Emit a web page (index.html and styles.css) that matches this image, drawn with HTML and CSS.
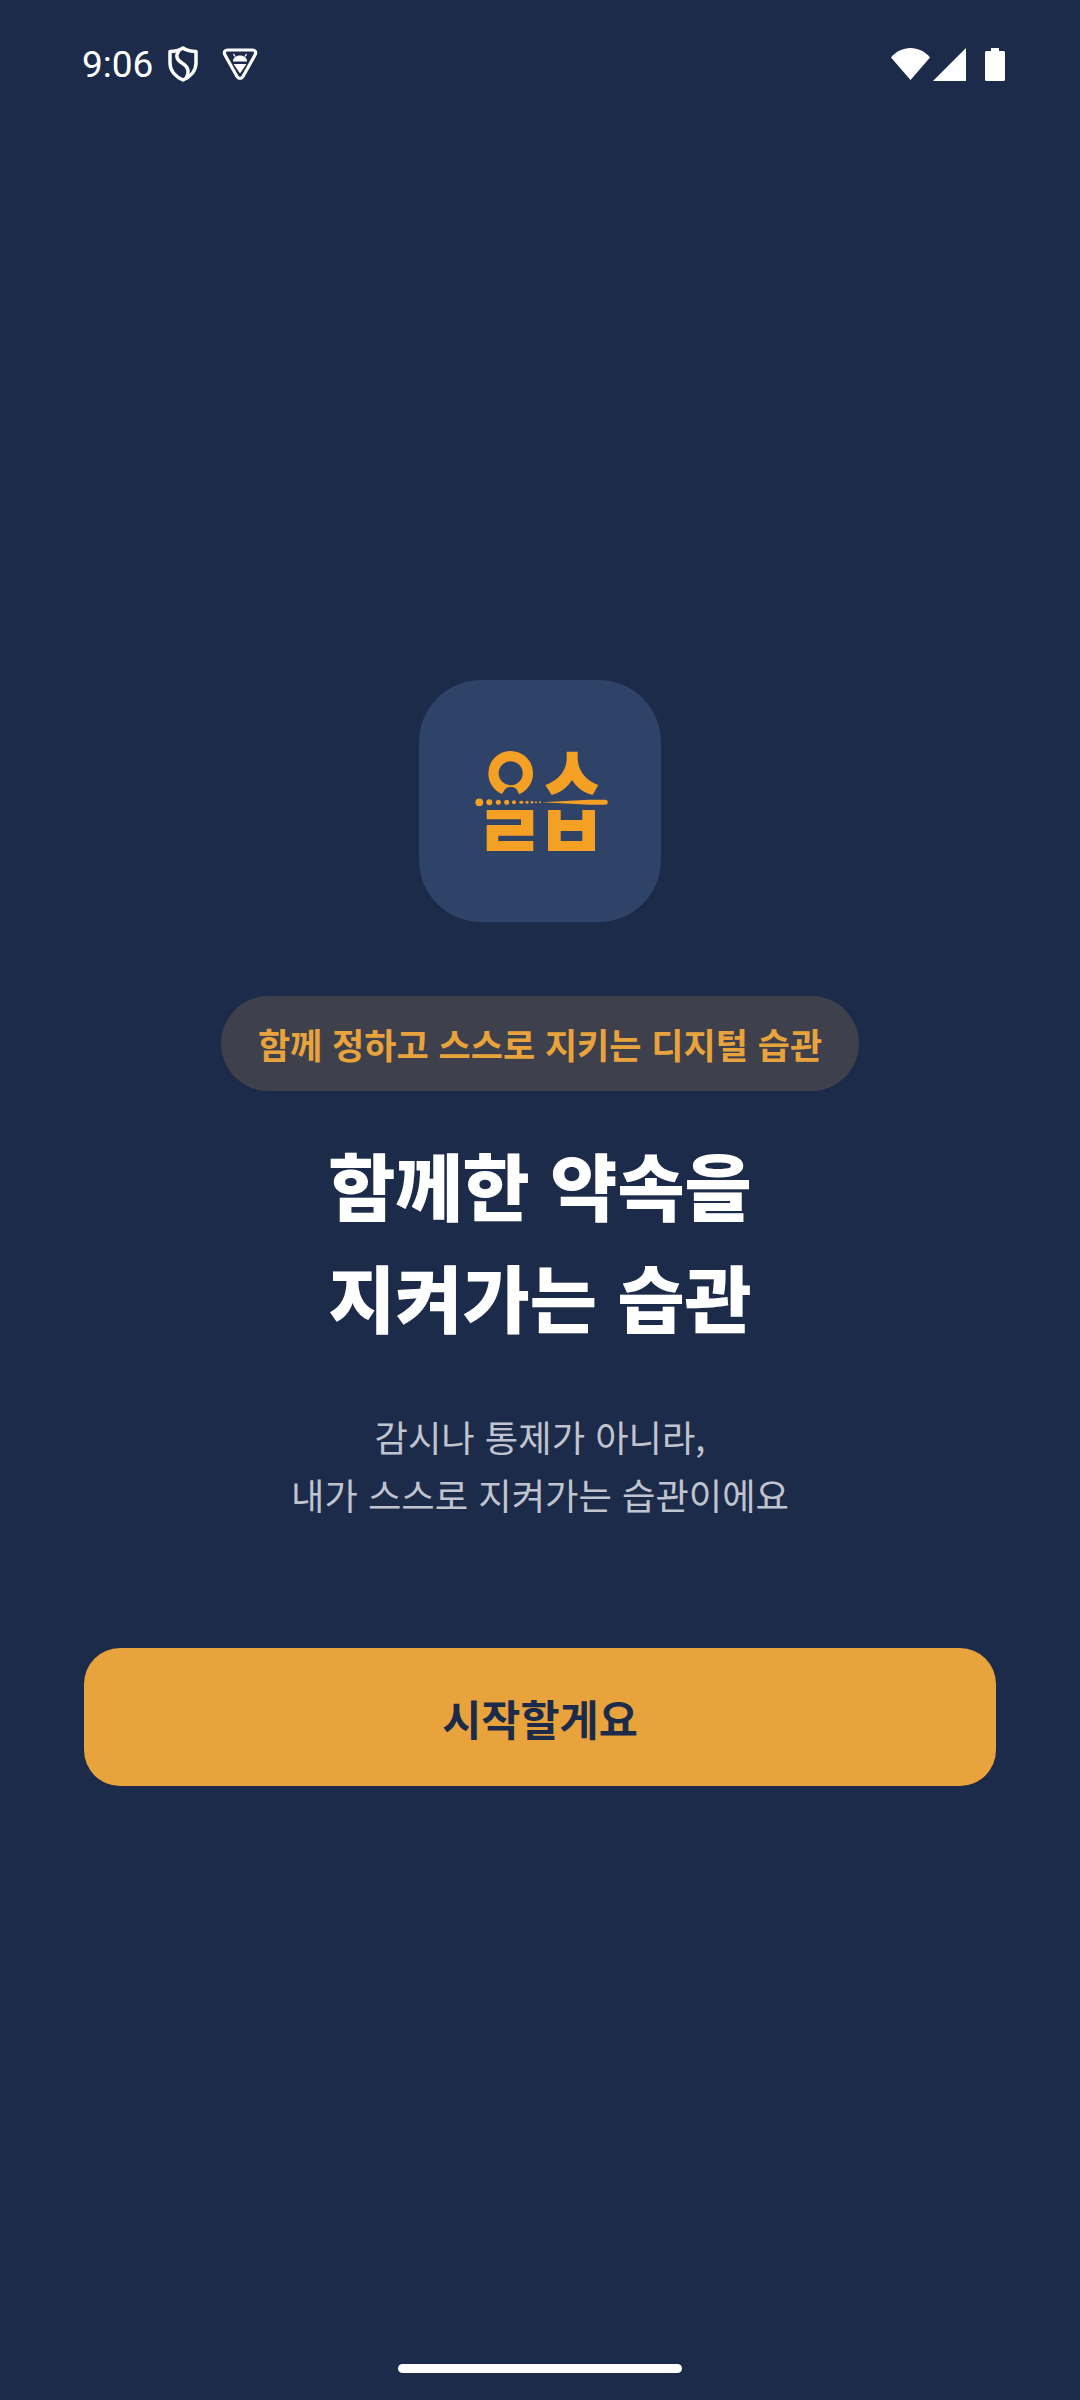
FILE: index.html
```html
<!DOCTYPE html>
<html lang="ko">
<head>
	<meta charset="UTF-8">
	<title>시작</title>
	<link rel="stylesheet" href="styles.css">
</head>
<body>
	<div class="screen">
		<div class="status-bar">
			<div class="status-left">
				<span class="clock">9:06</span>
				<svg class="icon-shield" width="30" height="36" viewBox="0 0 30 36">
					<path d="M15 2 C19 4.500 24 5.500 28 5.500 V17 C28 25 22 31 15 34 C8 31 2 25 2 17 V5.500 C6 5.500 11 4.500 15 2 Z" fill="none" stroke="#fff" stroke-width="3.500" stroke-linejoin="round"/>
					<path d="M11 4.500 C7 10 9 14 14 17 C20 20.500 22 25 18 32.500" fill="none" stroke="#fff" stroke-width="3.500"/>
				</svg>
				<svg class="icon-warn" width="36" height="34" viewBox="0 0 36 34">
					<path d="M6 3 H30 C33.500 3 34.500 5.500 33 8 L21 29.500 C19.500 32 16.500 32 15 29.500 L3 8 C1.500 5.500 2.500 3 6 3 Z" fill="none" stroke="#fff" stroke-width="3.200" stroke-linejoin="round"/>
					<path d="M11 14.500 C11 10.800 14 8.500 18 8.500 C22 8.500 25 10.800 25 14.500 Z" fill="#fff"/>
					<path d="M11.500 17 H24.500 L18 26.500 Z" fill="#fff"/>
					<path d="M13 9.500 L11.500 7 M23 9.500 L24.500 7" stroke="#fff" stroke-width="1.400"/>
				</svg>
			</div>
			<div class="status-right">
				<svg class="icon-wifi" width="39" height="32" viewBox="0 0 39 32">
					<path d="M0 9.500 C5 3.500 12 0 19.500 0 C27 0 34 3.500 39 9.500 L19.500 32 Z" fill="#fff"/>
				</svg>
				<svg class="icon-signal" width="33" height="33" viewBox="0 0 33 33">
					<path d="M33 0 V33 H0 Z" fill="#fff"/>
				</svg>
				<svg class="icon-battery" width="20" height="33" viewBox="0 0 20 33">
					<path d="M6 0 H14 V3 H18.500 C19.400 3 20 3.600 20 4.500 V31.500 C20 32.400 19.400 33 18.500 33 H1.500 C0.600 33 0 32.400 0 31.500 V4.500 C0 3.600 0.600 3 1.500 3 H6 Z" fill="#fff"/>
				</svg>
			</div>
		</div>

		<div class="content">
			<div class="logo-box">
				<svg width="242" height="242" viewBox="0 0 242 242">
					<circle cx="91.700" cy="93.300" r="17.200" fill="none" stroke="#f4a024" stroke-width="10.400"/>
					<path d="M81 117 L85.500 110 C87 107.500 89.500 107 92.300 107 C95 107 97.500 108 99 112 L102 118 Z" fill="#2f4267"/>
					<path d="M147.700 71.700 H158.700 V78 C159 92 168 101 179.300 105 L173.700 115 C165 113 157 107 153 100 C149 107 141 113 132.700 115 L126.300 105 C138 101 147.700 92 147.700 78 Z" fill="#f4a024"/>
					<g fill="#f4a024">
						<circle cx="60.300" cy="122.300" r="3.900"/>
						<circle cx="70.300" cy="122.300" r="3"/>
						<circle cx="79.300" cy="122.300" r="2.500"/>
						<circle cx="87.700" cy="122.300" r="2.500"/>
						<circle cx="95" cy="122.300" r="2"/>
						<ellipse cx="102.300" cy="122.300" rx="2" ry="1.500"/>
						<circle cx="108" cy="122.300" r="1.500"/>
						<circle cx="113" cy="122.300" r="1.300"/>
						<circle cx="117" cy="122.300" r="1"/>
						<circle cx="121" cy="122.300" r="1"/>
						<path d="M122.700 122.300 L170 119.800 H186.500 C189.500 119.800 189.500 124.800 186.500 124.800 H170 Z"/>
						<path d="M67.700 130 H114.300 V155.700 H79.300 V161 H114.300 V171 H67.700 V145 H102 V139.300 H67.700 Z"/>
						<path fill-rule="evenodd" d="M129 130 H141.700 V140 H163.300 V130 H176 V171 H129 Z M141.700 151 H163.300 V161 H141.700 Z"/>
					</g>
				</svg>
			</div>
			<div class="tagline">함께 정하고 스스로 지키는 디지털 습관</div>
			<h1 class="title">함께한 약속을<br>지켜가는 습관</h1>
			<p class="desc">감시나 통제가 아니라,<br>내가 스스로 지켜가는 습관이에요</p>
			<button class="start-btn">시작할게요</button>
		</div>

		<div class="home-bar"></div>
	</div>
</body>
</html>
```

FILE: styles.css
```css
* {
	box-sizing: border-box;
}
html, body {
	margin: 0;
	padding: 0;
}
body {
	background-color: #1c2b4a;
	font-family: "Noto Sans CJK KR", "Noto Sans", sans-serif;
}
.screen {
	width: 1080px;
	height: 2400px;
	display: flex;
	flex-direction: column;
	overflow: hidden;
}
.status-bar {
	height: 128px;
	flex-shrink: 0;
	padding: 0 75px 0 82px;
	display: flex;
	align-items: center;
	justify-content: space-between;
}
.status-left {
	display: flex;
	align-items: center;
}
.clock {
	font-family: Roboto, sans-serif;
	font-size: 37px;
	color: #fff;
	width: 86px;
}
.icon-warn {
	margin-left: 24px;
}
.status-right {
	display: flex;
	align-items: center;
}
.icon-signal {
	margin-left: 3px;
}
.icon-battery {
	margin-left: 19px;
}
.content {
	flex: 1;
	padding-top: 552px;
	display: flex;
	flex-direction: column;
	align-items: center;
}
.logo-box {
	width: 242px;
	height: 242px;
	border-radius: 62px;
	background-color: #2f4267;
}
.logo-box svg {
	display: block;
}
.tagline {
	margin-top: 74px;
	width: 638px;
	height: 95px;
	border-radius: 48px;
	background-color: #3e404b;
	color: #e8a33d;
	font-size: 35px;
	font-weight: 700;
	line-height: 95px;
	text-align: center;
}
.title {
	margin: 36px 0 0;
	color: #fff;
	font-size: 73px;
	font-weight: 900;
	line-height: 112px;
	text-align: center;
}
.desc {
	margin: 56px 0 0;
	color: #c0c4ce;
	font-size: 36.300px;
	font-weight: 400;
	line-height: 58px;
	text-align: center;
}
.start-btn {
	margin-top: 125px;
	width: 912px;
	height: 138px;
	border: 0;
	border-radius: 36px;
	background-color: #e8a33d;
	color: #1c2b4a;
	font-family: inherit;
	font-size: 42.500px;
	font-weight: 700;
}
.home-bar {
	flex-shrink: 0;
	align-self: center;
	width: 284px;
	height: 9px;
	margin-bottom: 27px;
	border-radius: 5px;
	background-color: #fff;
}
```
